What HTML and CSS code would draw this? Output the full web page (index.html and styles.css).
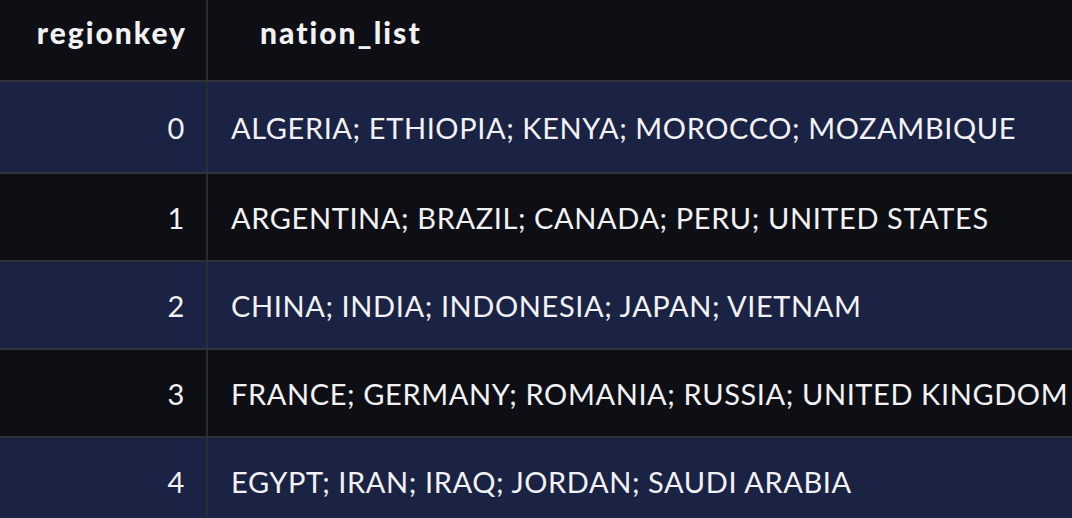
FILE: index.html
```html
<!DOCTYPE html>
<html>
<head>
<meta charset="utf-8">
<link rel="stylesheet" href="styles.css">
</head>
<body>
<table class="grid">
  <colgroup>
    <col class="col-key">
    <col class="col-list">
  </colgroup>
  <thead>
    <tr>
      <th class="key">regionkey</th>
      <th class="list">nation_list</th>
    </tr>
  </thead>
  <tbody>
    <tr class="odd first"><td class="key">0</td><td class="list">ALGERIA; ETHIOPIA; KENYA; MOROCCO; MOZAMBIQUE</td></tr>
    <tr class="even"><td class="key">1</td><td class="list">ARGENTINA; BRAZIL; CANADA; PERU; UNITED STATES</td></tr>
    <tr class="odd"><td class="key">2</td><td class="list">CHINA; INDIA; INDONESIA; JAPAN; VIETNAM</td></tr>
    <tr class="even"><td class="key">3</td><td class="list">FRANCE; GERMANY; ROMANIA; RUSSIA; UNITED KINGDOM</td></tr>
    <tr class="odd"><td class="key">4</td><td class="list">EGYPT; IRAN; IRAQ; JORDAN; SAUDI ARABIA</td></tr>
  </tbody>
</table>
</body>
</html>
```

FILE: styles.css
```css
html, body {
  margin: 0;
  padding: 0;
  background: #0e0f15;
  overflow: hidden;
}
.grid {
  border-collapse: collapse;
  width: 1072px;
  table-layout: fixed;
  font-family: "Lato", "Noto Sans", sans-serif;
  color: #f2f2f4;
}
.col-key {
  width: 207px;
}
.grid th, .grid td {
  padding: 0;
  white-space: nowrap;
  overflow: hidden;
}
.grid th {
  height: 63px;
  padding-bottom: 17px;
  font-size: 30px;
  font-weight: 900;
  letter-spacing: 2px;
  border-bottom: 2px solid #303236;
  vertical-align: middle;
}
.grid td {
  height: 86px;
  font-size: 29px;
  font-weight: 400;
  letter-spacing: 0.6px;
  border-bottom: 2px solid #303236;
  vertical-align: middle;
}
.grid .first td {
  height: 90px;
}
.grid .key {
  padding-right: 21px;
  text-align: right;
  border-right: 2px solid #2a2c33;
}
.grid th.key {
  padding-right: 19px;
}
.grid th.list {
  text-align: left;
  padding-left: 52px;
}
.grid td.list {
  text-align: left;
  padding-left: 23px;
}
.odd {
  background: #1b2344;
}
.even {
  background: #0e0f15;
}
```
